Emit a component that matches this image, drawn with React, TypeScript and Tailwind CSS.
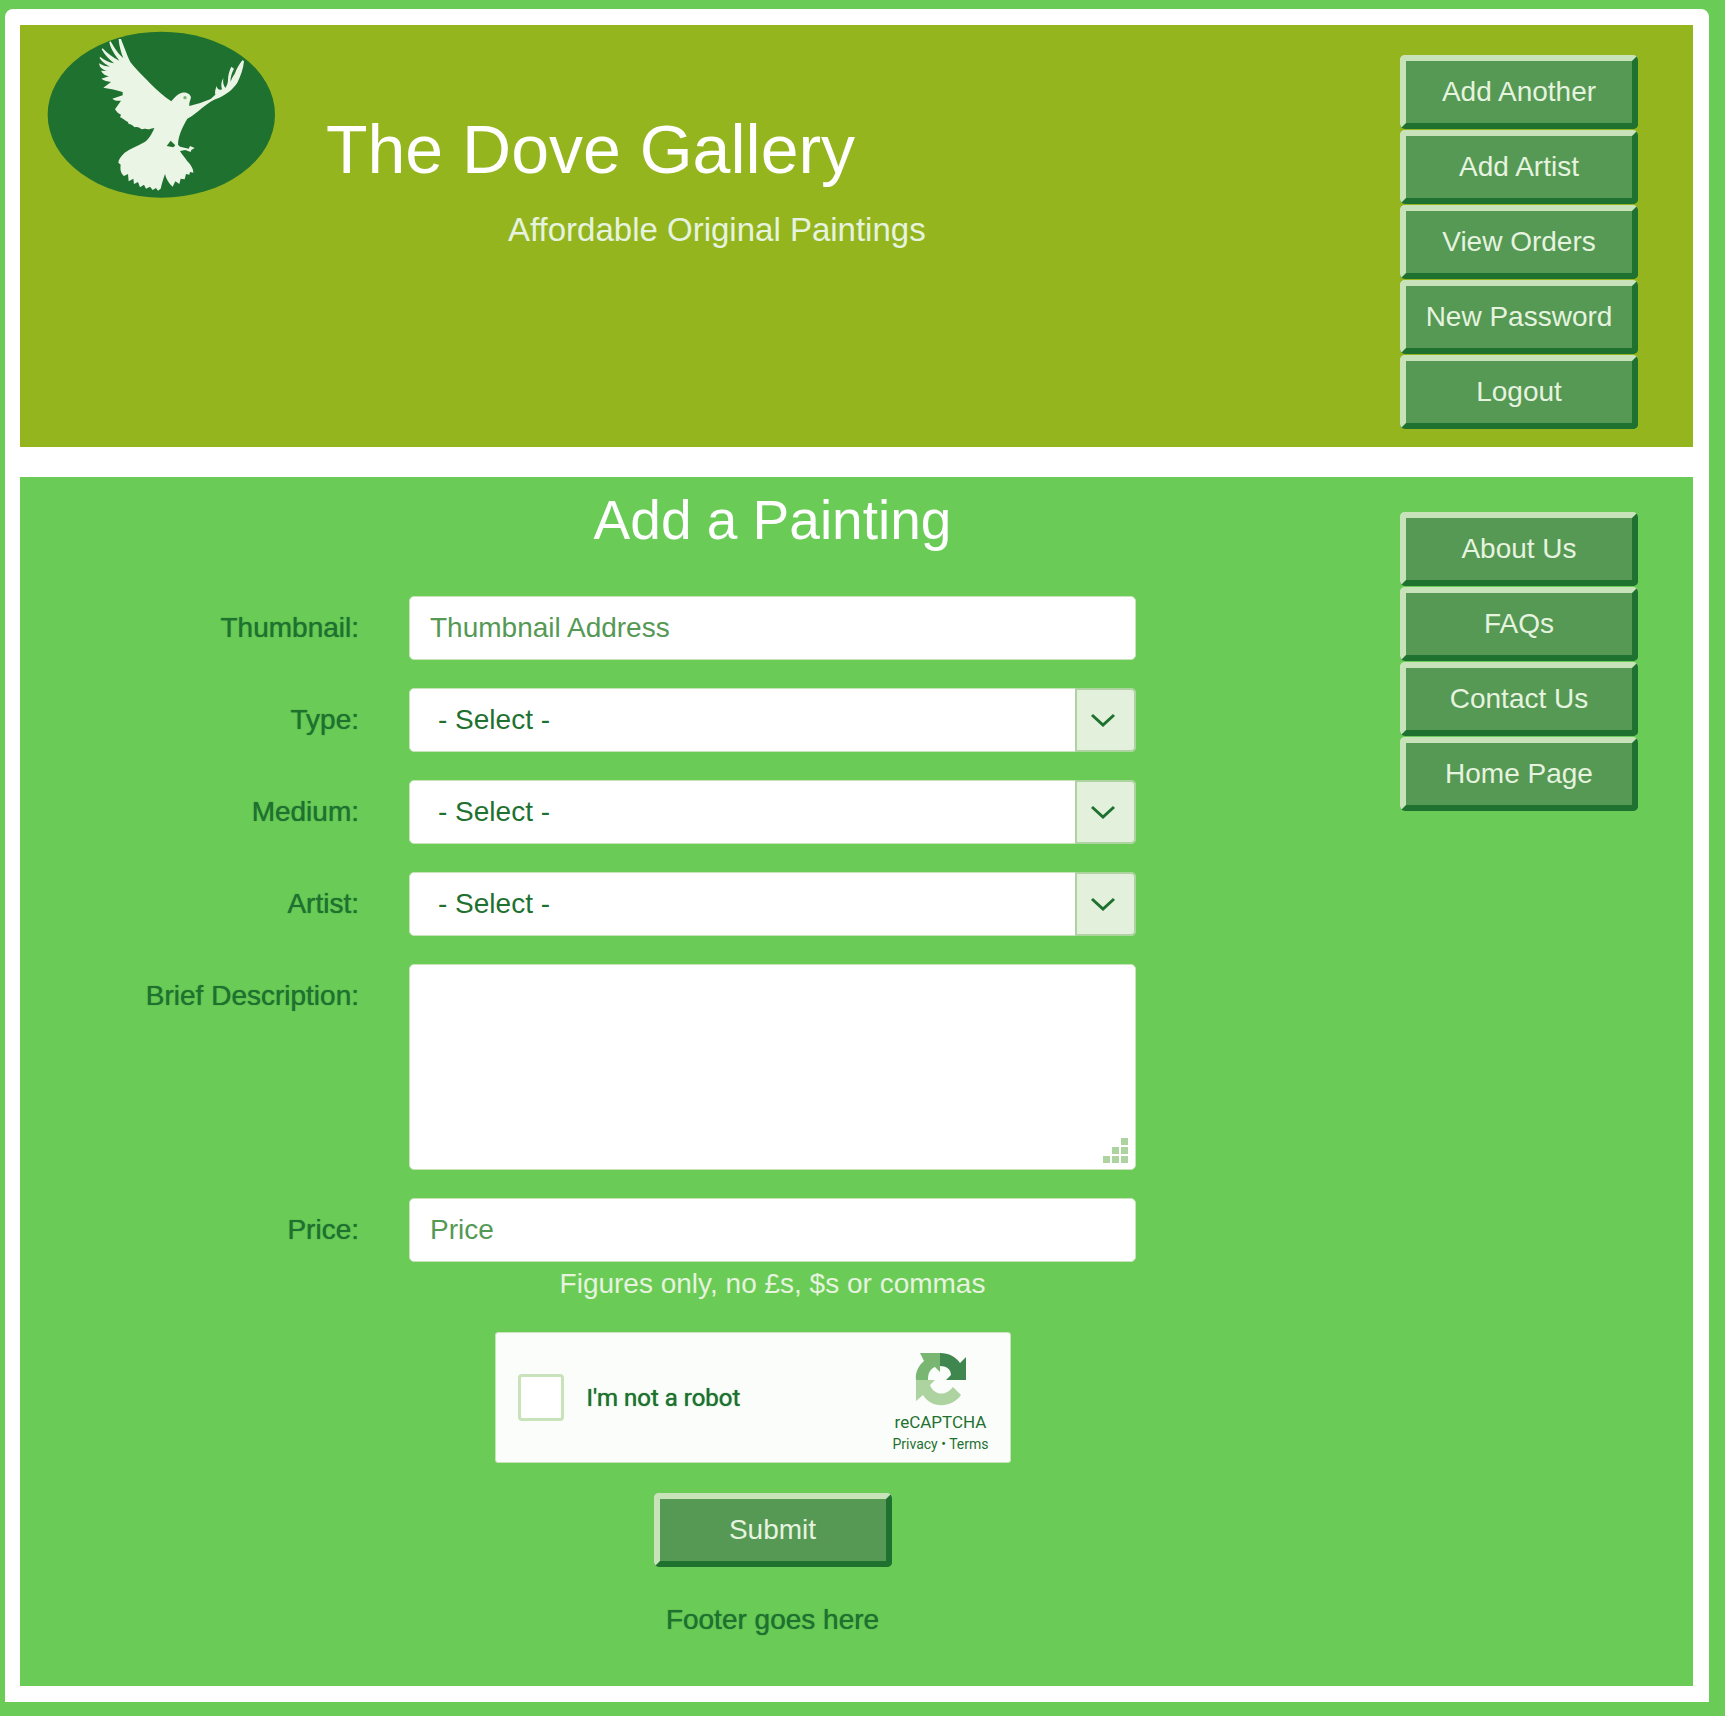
import type { ReactNode } from "react";

const buttonClass =
  "flex h-[74px] w-[238px] cursor-pointer items-center justify-center rounded-[5px] border-[6px] border-t-[#c8e2ba] border-l-[#c8e2ba] border-r-[#1f7130] border-b-[#1f7130] bg-[#559955] text-[28px] leading-8 whitespace-nowrap text-[#e6f3df]";

const fieldClass =
  "block h-16 w-full rounded-[5px] border border-[#c8e2ba] bg-white px-5 text-[28px] leading-8 text-[#1f7130] outline-none placeholder:text-[#559955] placeholder:opacity-100";

function NavButtons({ items, label }: { items: string[]; label: string }) {
  return (
    <nav aria-label={label} className="flex flex-none flex-col gap-px">
      {items.map((item) => (
        <button key={item} type="button" className={buttonClass}>
          {item}
        </button>
      ))}
    </nav>
  );
}

function Row({ id, label, children }: { id: string; label: string; children: ReactNode }) {
  return (
    <div className="grid grid-cols-[339px_1fr] gap-x-[50px]">
      <label
        htmlFor={id}
        className="h-16 text-right text-[28px] leading-[64px] text-[#1f7130] [text-shadow:0_0_1px_#1f7130]"
      >
        {label}
      </label>
      {children}
    </div>
  );
}

function SelectField({ id, label }: { id: string; label: string }) {
  return (
    <Row id={id} label={label}>
      <div className="relative">
        <select id={id} className={`${fieldClass} appearance-none pl-7`}>
          <option>- Select -</option>
        </select>
        <span className="pointer-events-none absolute inset-y-0 right-0 flex w-[61px] items-center justify-center rounded-r-[5px] border-2 border-[#acd3a0] bg-[#e3f1dc] pr-[6px]">
          <svg width="26" height="14" viewBox="0 0 26 14" fill="none" aria-hidden="true">
            <path d="M2 2 L13 12 L24 2" stroke="#1f7130" strokeWidth="3" />
          </svg>
        </span>
      </div>
    </Row>
  );
}

function DoveLogo() {
  return (
    <svg width="229" height="168" viewBox="141 93 687 504" role="img" aria-label="White dove">
      <ellipse cx="484" cy="344" rx="341" ry="249" fill="#1f7130" />
      <path
        fill="#eaf5e5"
        d="M514 304 C492 290 470 270 450 250 C428 226 404 204 391 186 C382 168 372 140 363 117 L356 117 C357 136 363 158 370 174 C354 162 342 142 332 124 L328 126 C331 146 346 166 358 182 C340 174 322 160 308 145 L305 148 C314 166 330 180 342 190 C328 188 312 180 300 170 L299 175 C308 188 320 196 330 200 C318 200 306 196 297 190 L300 200 C307 208 316 212 324 213 L303 212 C308 222 318 228 327 229 L304 236 C312 242 322 244 333 246 L310 263 C326 266 345 268 368 276 L368 286 L337 296 C344 302 352 303 363 302 L345 328 C350 336 356 342 363 344 L360 352 C372 356 376 364 384 366 L386 372 C394 372 400 378 404 382 C412 378 420 384 426 388 C436 382 444 392 452 386 L463 384 C456 402 446 418 434 426 C414 438 392 446 374 458 C362 470 356 478 355 488 L362 494 C360 508 362 520 372 528 L384 522 L386 544 L400 536 L402 552 L414 546 L420 562 L432 554 L438 566 L450 560 L458 570 L468 564 L474 572 L482 566 C486 550 490 536 495 522 C498 536 506 550 518 560 L526 544 L538 552 L542 536 L554 538 L558 522 L568 524 L570 516 L580 518 C580 504 570 492 562 484 C556 474 546 464 540 453 L556 450 L572 456 L574 450 L584 444 L570 438 L566 446 L540 440 L534 434 C534 420 538 408 542 396 C548 380 556 366 562 356 C578 348 592 336 606 324 C624 310 640 298 656 294 C682 282 700 266 712 248 C722 228 730 206 732 183 L727 181 C718 192 710 206 704 222 C698 230 694 238 692 246 C690 232 696 218 702 206 L694 200 C688 212 684 226 684 240 C684 250 680 258 676 264 C670 256 668 246 670 234 C664 244 662 256 666 268 C658 272 652 268 650 258 C646 268 644 276 646 284 C638 290 636 294 632 297 C612 306 590 312 568 318 C566 310 572 300 573 292 C570 280 558 276 546 278 C532 282 524 292 514 304 Z"
      />
      <circle cx="555" cy="293" r="5" fill="#79b672" />
      <path d="M500 438 L512 422 L526 436 L520 442 Z" fill="#1f7130" />
    </svg>
  );
}

function RecaptchaIcon() {
  return (
    <svg width="52" height="54" viewBox="0 0 52 54" aria-hidden="true">
      <path
        fill="#1f7130"
        fillOpacity="0.85"
        d="M25 1 C34 1 41 5 45 11 L51 5 V28 H31 L36 23 C36 17 31 14 25 14 Z"
      />
      <path
        fill="#79b672"
        d="M25 1 V20 L20 15 C15 17 13 21 13 28 H1 C0 20 4 13 9 9 L5 1 Z"
      />
      <path
        fill="#acd3a0"
        d="M1 28 H20 L15 33 C19 43 30 45 38 35 L46 43 C36 57 15 56 8 43 L1 49 Z"
      />
    </svg>
  );
}

export default function App() {
  return (
    <div className="bg-[#6acc56] pt-[9px] pr-4 pb-[14px] pl-[5px] font-['Liberation_Sans',Arial,sans-serif]">
      <div className="flex flex-col gap-[30px] rounded-t-lg border-[16px] border-l-[15px] border-white bg-white">
        <header className="flex items-start bg-[#95b51f] pt-[30px] pr-[55px] pb-[18px]">
          <div className="-mt-6 ml-[27px] flex-none">
            <DoveLogo />
          </div>
          <div className="ml-[50px] min-w-0 flex-1 pt-[60px]">
            <h1 className="text-[68px] leading-[68px] text-white">The Dove Gallery</h1>
            <p className="mt-[27px] ml-[182px] text-[33px] leading-10 text-[#e6f3df]">
              Affordable Original Paintings
            </p>
          </div>
          <NavButtons
            label="Account"
            items={["Add Another", "Add Artist", "View Orders", "New Password", "Logout"]}
          />
        </header>

        <div className="flex items-start gap-[264px] bg-[#6acc56] pr-[55px] pb-[50px]">
          <main className="min-w-0 flex-1 pt-[13px]">
            <form className="flex flex-col" onSubmit={(e) => e.preventDefault()}>
              <h2 className="mb-[46px] ml-[389px] text-center text-[55px] leading-[60px] text-white">
                Add a Painting
              </h2>

              <div className="flex flex-col gap-7">
                <Row id="thumbnail" label="Thumbnail:">
                  <input
                    id="thumbnail"
                    type="text"
                    placeholder="Thumbnail Address"
                    className={fieldClass}
                  />
                </Row>
                <SelectField id="type" label="Type:" />
                <SelectField id="medium" label="Medium:" />
                <SelectField id="artist" label="Artist:" />
                <Row id="description" label="Brief Description:">
                  <div className="relative">
                    <textarea
                      id="description"
                      className="block h-[206px] w-full resize-none rounded-[5px] border border-[#c8e2ba] bg-white px-5 py-4 text-[28px] leading-8 text-[#1f7130] outline-none"
                    />
                    <svg
                      className="pointer-events-none absolute right-2 bottom-[7px]"
                      width="25"
                      height="25"
                      viewBox="0 0 25 25"
                      fill="#acd3a0"
                      aria-hidden="true"
                    >
                      <rect x="18" y="0" width="7" height="7" />
                      <rect x="9" y="9" width="7" height="7" />
                      <rect x="18" y="9" width="7" height="7" />
                      <rect x="0" y="18" width="7" height="7" />
                      <rect x="9" y="18" width="7" height="7" />
                      <rect x="18" y="18" width="7" height="7" />
                    </svg>
                  </div>
                </Row>
                <Row id="price" label="Price:">
                  <input id="price" type="text" placeholder="Price" className={fieldClass} />
                </Row>
              </div>

              <div className="ml-[389px] flex flex-col items-center">
                <p className="mt-[6px] text-[28px] leading-8 text-[#e6f3df]">
                  Figures only, no £s, $s or commas
                </p>

                <div className="mt-8 mr-10 flex h-[131px] w-[516px] items-center rounded-[3px] border border-[#c8e2ba] bg-[#fbfdfa] pr-[21px] pl-[22px] font-[Roboto,sans-serif]">
                  <input
                    id="robot"
                    type="checkbox"
                    className="h-[47px] w-[46px] appearance-none rounded-[4px] border-[3px] border-[#c8e2ba] bg-white"
                  />
                  <label htmlFor="robot" className="ml-[23px] text-2xl text-[#1f7130] [text-shadow:0_0_1px_#1f7130]">
                    I'm not a robot
                  </label>
                  <div className="ml-auto flex flex-col items-center pt-2 text-[#1f7130]">
                    <RecaptchaIcon />
                    <span className="mt-[6px] text-[17px] leading-5">reCAPTCHA</span>
                    <span className="mt-1 text-sm leading-4">
                      <a href="#privacy">Privacy</a> • <a href="#terms">Terms</a>
                    </span>
                  </div>
                </div>

                <button type="submit" className={`${buttonClass} mt-[30px]`}>
                  Submit
                </button>
                <p className="mt-[37px] text-[28px] leading-8 text-[#1f7130] [text-shadow:0_0_1px_#1f7130]">
                  Footer goes here
                </p>
              </div>
            </form>
          </main>

          <aside className="pt-[35px]">
            <NavButtons label="Site" items={["About Us", "FAQs", "Contact Us", "Home Page"]} />
          </aside>
        </div>
      </div>
    </div>
  );
}
